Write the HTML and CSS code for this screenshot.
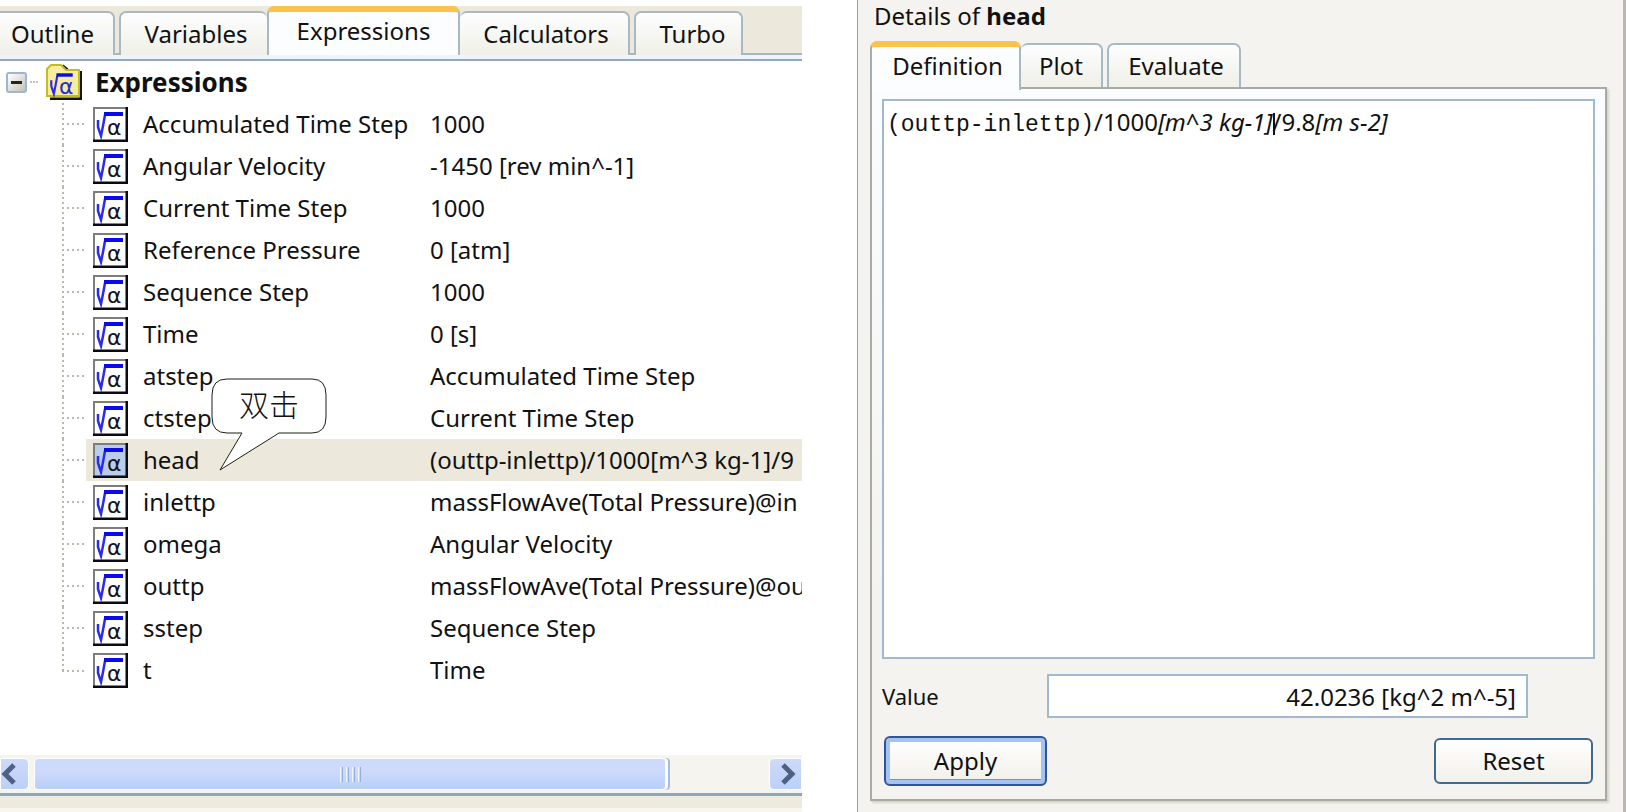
FILE: index.html
```html
<!DOCTYPE html>
<html lang="en">
<head>
    <title>Expressions</title>
    <meta charset="UTF-8">
    <meta name="viewport" content="width=device-width, initial-scale=1.0">
    <link rel="stylesheet" href="styles.css">
</head>
<body>
    <svg class="defs" aria-hidden="true">
        <symbol id="root" viewBox="0 0 35 35">
            <path d="M5 13V20L8 29L10 19L12 8" fill="none" stroke="#2a2af0" stroke-width="2.5"/>
            <path d="M11 7H30" stroke="#0a0aeb" stroke-width="4"/>
        </symbol>
        <symbol id="expr" viewBox="0 0 35 35">
            <path d="M1 34V1H34" fill="none" stroke="#7d7d7d" stroke-width="2"/>
            <path d="M0 34H34V0" fill="none" stroke="#0a0a14" stroke-width="3"/>
            <use href="#root"/>
            <text x="14" y="28" class="alpha">α</text>
        </symbol>
    </svg>

    <div class="workspace">
        <section class="browser">
            <div class="tabs" role="tablist">
                <button class="tab outline" role="tab">Outline</button>
                <button class="tab variables" role="tab">Variables</button>
                <button class="tab expressions active" role="tab" aria-selected="true">Expressions</button>
                <button class="tab calculators" role="tab">Calculators</button>
                <button class="tab turbo" role="tab">Turbo</button>
            </div>

            <div class="tree">
                <div class="root-row">
                    <button class="toggle" aria-label="Collapse Expressions"></button>
                    <span class="stub"></span>
                    <svg class="folder" viewBox="0 0 36 36">
                        <path d="M4 35H35V7" fill="none" stroke="#14140a" stroke-width="3"/>
                        <path d="M16 2L21 6" stroke="#14140a" stroke-width="4"/>
                        <path d="M1 32V5L5 1H15L20 6H33V32Z" fill="#f6eda0" stroke="#c3bb24" stroke-width="2"/>
                        <use href="#root" x="1" y="5" width="30" height="30"/>
                        <text x="13" y="30" class="alpha blue">α</text>
                    </svg>
                    <strong>Expressions</strong>
                </div>
                <ul class="items">
                    <li><svg class="icon"><use href="#expr"/></svg><span class="name">Accumulated Time Step</span><span>1000</span></li>
                    <li><svg class="icon"><use href="#expr"/></svg><span class="name">Angular Velocity</span><span>-1450 [rev min^-1]</span></li>
                    <li><svg class="icon"><use href="#expr"/></svg><span class="name">Current Time Step</span><span>1000</span></li>
                    <li><svg class="icon"><use href="#expr"/></svg><span class="name">Reference Pressure</span><span>0 [atm]</span></li>
                    <li><svg class="icon"><use href="#expr"/></svg><span class="name">Sequence Step</span><span>1000</span></li>
                    <li><svg class="icon"><use href="#expr"/></svg><span class="name">Time</span><span>0 [s]</span></li>
                    <li><svg class="icon"><use href="#expr"/></svg><span class="name">atstep</span><span>Accumulated Time Step</span></li>
                    <li><svg class="icon"><use href="#expr"/></svg><span class="name">ctstep</span><span>Current Time Step</span></li>
                    <li class="selected">
                        <svg class="icon"><use href="#expr"/></svg><span class="name">head</span><span>(outtp-inlettp)/1000[m^3 kg-1]/9</span>
                        <div class="callout">
                            <svg viewBox="0 0 118 94">
                                <path d="M16 1H101Q115 1 115 17V39Q115 55 101 55H68L9 92L31 55H16Q1 55 1 39V17Q1 1 16 1Z" fill="#fff" stroke="#1e1e14"/>
                            </svg>
                            <span lang="zh">双击</span>
                        </div>
                    </li>
                    <li><svg class="icon"><use href="#expr"/></svg><span class="name">inlettp</span><span>massFlowAve(Total Pressure)@in</span></li>
                    <li><svg class="icon"><use href="#expr"/></svg><span class="name">omega</span><span>Angular Velocity</span></li>
                    <li><svg class="icon"><use href="#expr"/></svg><span class="name">outtp</span><span>massFlowAve(Total Pressure)@ou</span></li>
                    <li><svg class="icon"><use href="#expr"/></svg><span class="name">sstep</span><span>Sequence Step</span></li>
                    <li><svg class="icon"><use href="#expr"/></svg><span class="name">t</span><span>Time</span></li>
                </ul>
            </div>

            <div class="scrollbar">
                <button class="arrow left" aria-label="Scroll left">
                    <svg viewBox="0 0 16 22"><path d="M13 2L4 11L13 20" fill="none" stroke="#4d6185" stroke-width="5"/></svg>
                </button>
                <div class="track">
                    <div class="thumb"><i></i><i></i><i></i><i></i></div>
                </div>
                <button class="arrow right" aria-label="Scroll right">
                    <svg viewBox="0 0 16 22"><path d="M3 2L12 11L3 20" fill="none" stroke="#4d6185" stroke-width="5"/></svg>
                </button>
            </div>
        </section>

        <section class="details">
            <h1>Details of <strong>head</strong></h1>
            <div class="tabs" role="tablist">
                <button class="tab definition active" role="tab" aria-selected="true">Definition</button>
                <button class="tab plot" role="tab">Plot</button>
                <button class="tab evaluate" role="tab">Evaluate</button>
            </div>
            <form class="pane">
                <div class="editor" contenteditable="true" role="textbox" aria-label="Definition" spellcheck="false"><code>(outtp-inlettp)</code>/1000<em>[m^3 kg-1]</em><span class="caret"></span>/9.8<em>[m s-2]</em></div>
                <div class="value-row">
                    <label for="value">Value</label>
                    <input type="text" id="value" value="42.0236 [kg^2 m^-5]" readonly>
                </div>
                <div class="buttons">
                    <button type="button" class="btn default">Apply</button>
                    <button type="button" class="btn">Reset</button>
                </div>
            </form>
        </section>
    </div>
</body>
</html>
```
FILE: styles.css
```css
body {
    margin: 0;
    background-color: #fff;
    color: #111;
    font-family: "Noto Sans", Tahoma, sans-serif;
    font-size: 24px;
    line-height: 32px;
}
button, input {
    font: inherit;
    color: inherit;
    box-sizing: border-box;
}
.defs {
    display: none;
}
.workspace {
    display: grid;
    grid-template-columns: 802fr 769fr;
    gap: 55px;
    min-height: 100vh;
}

/* tabs */
.tabs {
    display: flex;
    align-items: flex-end;
}
.tab {
    height: 44px;
    padding: 0;
    border: 2px solid #a9b9c4;
    border-bottom: none;
    border-radius: 7px 7px 0 0;
    background: linear-gradient(#fdfefe, #f0efe8);
    white-space: nowrap;
}
.tab + .tab {
    margin-left: 4px;
}
.tab.active {
    height: 49px;
    margin-left: 0;
    padding-bottom: 6px;
    border-top: 6px solid #fcc24a;
    background: #fcfdff;
}
.tab.active + .tab {
    margin-left: 0;
    border-left: none;
}

/* left side */
.browser {
    display: flex;
    flex-direction: column;
    min-width: 0;
    padding-top: 6px;
    overflow: hidden;
}
.browser .tabs {
    background: #ece9dc;
    box-shadow: inset 0 -2px #a9b5bf;
}
.outline {
    width: 115px;
    padding-right: 8px;
    border-left: none;
    border-top-left-radius: 0;
}
.variables {
    width: 148px;
    padding-left: 4px;
    border-right: none;
}
.tab.expressions {
    width: 193px;
    margin-left: 0;
}
.calculators {
    width: 170px;
    padding-left: 4px;
}
.turbo {
    width: 109px;
    padding-left: 8px;
}
.tree {
    flex: 1;
    margin-top: 4px;
    border-top: 2px solid #93a9c0;
    box-shadow: 0 -4px #eef4fc;
}
.root-row {
    display: flex;
    align-items: center;
    height: 42px;
    padding-left: 6px;
}
.root-row strong {
    margin-left: 13px;
    font-size: 26px;
}
.toggle {
    width: 21px;
    height: 21px;
    padding: 0 3px;
    border: 2px solid #9db6d2;
    border-radius: 3px;
    background: linear-gradient(#222, #222) center / 11px 3px no-repeat, linear-gradient(135deg, #fff, #c6c2b8);
}
.stub {
    width: 8px;
    margin: 0 8px 0 3px;
    border-top: 2px dotted #c4c4b8;
}
.folder {
    width: 36px;
    height: 36px;
}
.items {
    margin: 0;
    padding: 0 0 0 86px;
    list-style: none;
}
.items li {
    display: flex;
    align-items: center;
    position: relative;
    height: 42px;
    padding-left: 7px;
    white-space: nowrap;
}
.items li::before {
    content: "";
    position: absolute;
    left: -24px;
    top: 0;
    width: 22px;
    height: 100%;
    background:
        repeating-linear-gradient(90deg, #b9b9ac 0 2px, transparent 2px 5px) left center / 100% 2px no-repeat,
        repeating-linear-gradient(#b9b9ac 0 2px, transparent 2px 5px) left top / 2px 100% no-repeat;
}
.items li:last-child::before {
    height: 23px;
    background-position: left bottom, left top;
}
.items .selected {
    background: #ece9dc;
}
.icon {
    flex: none;
    width: 35px;
    height: 35px;
    background: #fff;
}
.selected .icon {
    background: #b9cdea;
}
.alpha {
    font: 22px "DejaVu Sans", sans-serif;
    fill: #14141e;
}
.alpha.blue {
    fill: #2828dc;
}
.name {
    flex: none;
    width: 287px;
    margin-left: 15px;
}
.callout {
    position: absolute;
    left: 125px;
    top: -61px;
    width: 118px;
    height: 94px;
    z-index: 1;
}
.callout svg {
    display: block;
    width: 118px;
    height: 94px;
}
.callout span {
    position: absolute;
    left: 0;
    top: 9px;
    width: 116px;
    text-align: center;
    font-family: "Noto Sans CJK SC", serif;
    font-size: 30px;
    font-weight: 300;
}

/* horizontal scrollbar */
.scrollbar {
    display: flex;
    align-items: center;
    height: 38px;
    margin-bottom: 16px;
    background: #f5f4ef;
    border-bottom: 3px solid #8aa7bf;
    box-shadow: 0 12px #eeeadd, 0 16px #f7f6f0;
}
.arrow {
    display: flex;
    align-items: center;
    height: 32px;
    border: 1px solid #fff;
    background: linear-gradient(#cddafa, #bcd0f8);
}
.arrow svg {
    width: 16px;
    height: 22px;
}
.arrow.left {
    width: 29px;
    padding: 0;
    border-radius: 0 5px 5px 0;
}
.arrow.right {
    width: 33px;
    padding: 0 0 0 10px;
    border-radius: 5px 0 0 5px;
}
.track {
    flex: 1;
    padding-left: 5px;
}
.thumb {
    display: flex;
    align-items: center;
    justify-content: center;
    gap: 3px;
    width: 86%;
    height: 32px;
    box-sizing: border-box;
    border: 1px solid #fff;
    border-radius: 4px;
    background: linear-gradient(#cddafb, #cddafb 40%, #b8cefa);
    box-shadow: 2px 0 #fff, 4px 0 #a3bde0;
}
.thumb i {
    width: 1px;
    height: 15px;
    border-left: 1px solid #eef3ff;
    border-right: 1px solid #94aee0;
}

/* right side */
.details {
    display: flex;
    flex-direction: column;
    min-width: 0;
    padding: 0 16px 11px 12px;
    border-left: 1px solid #90a49c;
    border-right: 3px solid #b9b9b4;
    background: #f4f3ef;
}
h1 {
    margin: 0 0 9px 4px;
    font-size: 24px;
    font-weight: normal;
}
.definition {
    width: 151px;
    padding-left: 4px;
}
.plot {
    width: 82px;
}
.evaluate {
    width: 134px;
    padding-left: 4px;
}
.details .tab.active {
    position: relative;
    margin-bottom: -3px;
    border-left-color: #a7acb0;
}
.pane {
    flex: 1;
    display: flex;
    flex-direction: column;
    padding: 10px;
    border: 2px solid #a7aba6;
    background: linear-gradient(#fbfcff, #f4f3ef 70%);
    box-shadow: 2px 2px 2px #d5d4c8;
}
.editor {
    flex: 1;
    padding: 5px 3px;
    border: 2px solid #a3b8cc;
    background: #fff;
    outline: none;
}
.editor code {
    font-family: "Liberation Mono", monospace;
    font-size: 23px;
}
.caret {
    display: inline-block;
    width: 2px;
    height: 22px;
    margin-right: -2px;
    background: #111;
    vertical-align: -4px;
}
.value-row {
    display: flex;
    align-items: center;
    margin-top: 15px;
}
.value-row label {
    width: 165px;
    font-size: 22px;
}
.value-row input {
    flex: 1;
    min-width: 0;
    height: 44px;
    margin-right: 67px;
    padding: 0 10px;
    border: 2px solid #a3b8cc;
    background: #fff;
    text-align: right;
}
.buttons {
    display: flex;
    justify-content: space-between;
    align-items: center;
    margin: 18px 2px 3px;
}
.btn {
    width: 159px;
    height: 46px;
    padding: 0;
    border: 2px solid #3f6a90;
    border-radius: 6px;
    background: linear-gradient(#fff, #f1f0ea);
}
.btn.default {
    width: 163px;
    height: 50px;
    border-color: #2f5596;
    box-shadow: inset 0 0 0 4px #a5c3f2, inset 0 -5px #6d95dd;
}
```
